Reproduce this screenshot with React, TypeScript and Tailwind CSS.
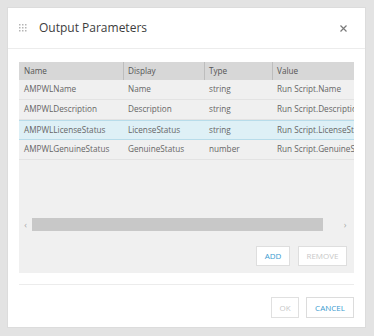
const rows = [
  { name: "AMPWLName", display: "Name", type: "string", value: "Run Script.Name" },
  { name: "AMPWLDescription", display: "Description", type: "string", value: "Run Script.Description" },
  { name: "AMPWLLicenseStatus", display: "LicenseStatus", type: "string", value: "Run Script.LicenseStatus", selected: true },
  { name: "AMPWLGenuineStatus", display: "GenuineStatus", type: "number", value: "Run Script.GenuineStatus" },
]

function DragIcon() {
  return (
    <svg width="8" height="8" viewBox="0 0 8 8" className="shrink-0">
      {[0, 3, 6].map((y) =>
        [0, 3, 6].map((x) => <rect key={`${x}-${y}`} x={x} y={y} width="1.5" height="1.5" fill="#b5b5b5" />)
      )}
    </svg>
  )
}

function CloseIcon() {
  return (
    <svg width="7" height="7" viewBox="0 0 7 7">
      <path d="M0.5 0.5 L6.5 6.5 M6.5 0.5 L0.5 6.5" stroke="#7a7a7a" strokeWidth="1.2" />
    </svg>
  )
}

export default function App() {
  return (
    <div
      className="w-[374px] h-[336px] bg-[#e3e3e3] pt-[7px] pl-[7px] overflow-hidden"
      style={{ fontFamily: '"Open Sans", sans-serif' }}
    >
      <div className="w-[359px] h-[321px] bg-white border border-[#dcdcdc] flex flex-col">
        {/* header */}
        <div className="h-[41px] shrink-0 flex items-center pl-[11px] pr-[18px] border-b border-[#ececec]">
          <DragIcon />
          <span className="ml-[12px] text-[12px] text-[#3d3d3d] leading-none">Output Parameters</span>
          <div className="ml-auto flex">
            <CloseIcon />
          </div>
        </div>

        {/* body */}
        <div className="px-[11px] pt-[13px]">
          <div className="h-[211px] bg-[#f0f0f0] flex flex-col overflow-hidden">
            <div className="h-[156px] overflow-hidden text-[8.2px] text-[#666]">
              <div className="flex h-[18px] items-center bg-[#d7d7d7] text-[#555] whitespace-nowrap">
                <div className="w-[104px] shrink-0 pl-[5px]">Name</div>
                <div className="w-[81px] shrink-0 pl-[4px] border-l border-[#bdbdbd] h-full flex items-center">Display</div>
                <div className="w-[68px] shrink-0 pl-[4px] border-l border-[#bdbdbd] h-full flex items-center">Type</div>
                <div className="w-[120px] shrink-0 pl-[4px] border-l border-[#bdbdbd] h-full flex items-center">Value</div>
              </div>
              {rows.map((r) => (
                <div
                  key={r.name}
                  className={
                    r.selected
                      ? "flex h-[20px] items-center whitespace-nowrap bg-[#def0f6] border-y border-[#b8dcea]"
                      : "flex h-[20px] items-center whitespace-nowrap border-b border-[#e3e3e3]"
                  }
                >
                  <div className="w-[104px] shrink-0 pl-[5px]">{r.name}</div>
                  <div className="w-[81px] shrink-0 pl-[5px]">{r.display}</div>
                  <div className="w-[68px] shrink-0 pl-[5px]">{r.type}</div>
                  <div className="w-[120px] shrink-0 pl-[5px]">{r.value}</div>
                </div>
              ))}
            </div>

            {/* horizontal scrollbar */}
            <div className="h-[13px] flex items-center">
              <span className="w-[13px] text-center text-[9px] text-[#aaa] leading-none">‹</span>
              <div className="h-[13px] w-[291px] bg-[#c8c8c8]" />
              <span className="ml-auto mr-[4px] w-[10px] text-center text-[9px] text-[#aaa] leading-none">›</span>
            </div>

            <div className="mt-[15px] flex justify-end gap-[8px] pr-[7px]">
              <button className="h-[20px] w-[34px] bg-white border border-[#dedede] text-[8px] text-[#3b9bd0]">ADD</button>
              <button className="h-[20px] w-[49px] bg-white border border-[#dedede] text-[8px] text-[#c8c8c8]">REMOVE</button>
            </div>
          </div>

          {/* footer */}
          <div className="mt-[11px] border-t border-[#ececec] pt-[12px] flex justify-end gap-[7px]">
            <button className="h-[21px] w-[28px] bg-white border border-[#e0e0e0] text-[8px] text-[#c8c8c8]">OK</button>
            <button className="h-[21px] w-[48px] bg-white border border-[#dcdcdc] text-[8px] text-[#3b9bd0]">CANCEL</button>
          </div>
        </div>
      </div>
    </div>
  )
}
